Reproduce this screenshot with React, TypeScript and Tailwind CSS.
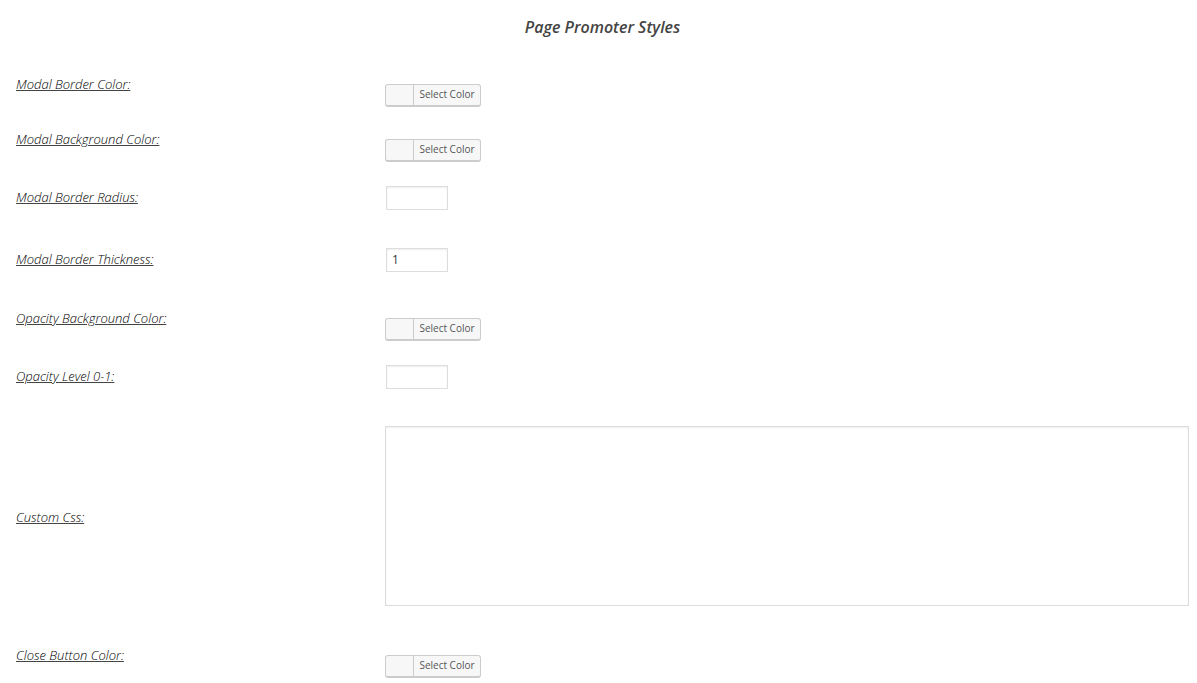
import { useState } from "react";

const rowGrid = "grid grid-cols-[369fr_804fr]";
const labelText =
  "text-[13px] leading-4 font-light italic text-black underline decoration-[#444]";

function ColorRow({ id, label }: { id: string; label: string }) {
  return (
    <div className={`${rowGrid} items-start pt-2 pb-4`}>
      <label htmlFor={id} className={labelText}>
        {label}
      </label>
      <button
        id={id}
        type="button"
        className="mt-2 flex h-[23px] w-24 cursor-pointer rounded-[3px] border border-b-2 border-[#ccc] bg-[#f7f7f7] text-[10px] leading-[18px] text-[#555]"
      >
        <span className="h-5 w-7 border-r border-[#ccc]" />
        <span className="flex-1 text-center whitespace-nowrap">Select Color</span>
      </button>
    </div>
  );
}

function NumberRow({ id, label, initial = "" }: { id: string; label: string; initial?: string }) {
  const [value, setValue] = useState(initial);
  return (
    <div className={`${rowGrid} items-center pt-2 pb-[30px]`}>
      <label htmlFor={id} className={`${labelText} pb-0.5`}>
        {label}
      </label>
      <input
        id={id}
        type="text"
        inputMode="decimal"
        value={value}
        onChange={(e) => setValue(e.target.value)}
        className="ml-px h-6 w-[62px] border border-[#ddd] bg-white px-[5px] pb-0.5 text-xs text-[#32373c] shadow-[inset_0_1px_2px_rgba(0,0,0,0.07)]"
      />
    </div>
  );
}

function TextRow({ id, label }: { id: string; label: string }) {
  return (
    <div className={`${rowGrid} items-center pt-[7px] pb-[33px]`}>
      <label htmlFor={id} className={`${labelText} pt-0.5`}>
        {label}
      </label>
      <textarea
        id={id}
        className="block h-[180px] w-full resize-none border border-[#ddd] bg-white p-1 text-xs shadow-[inset_0_1px_2px_rgba(0,0,0,0.07)]"
      />
    </div>
  );
}

export default function App() {
  return (
    <main className="min-h-screen bg-white pr-2 pl-4 font-['Open_Sans',sans-serif] text-[#444]">
      <h1 className="pt-[15px] pb-[29px] text-center text-base leading-6 font-semibold italic">
        Page Promoter Styles
      </h1>
      <form onSubmit={(e) => e.preventDefault()}>
        <ColorRow id="border-color" label="Modal Border Color:" />
        <ColorRow id="background-color" label="Modal Background Color:" />
        <NumberRow id="border-radius" label="Modal Border Radius:" />
        <NumberRow id="border-thickness" label="Modal Border Thickness:" initial="1" />
        <ColorRow id="opacity-color" label="Opacity Background Color:" />
        <NumberRow id="opacity-level" label="Opacity Level 0-1:" />
        <TextRow id="custom-css" label="Custom Css:" />
        <ColorRow id="close-color" label="Close Button Color:" />
      </form>
    </main>
  );
}
